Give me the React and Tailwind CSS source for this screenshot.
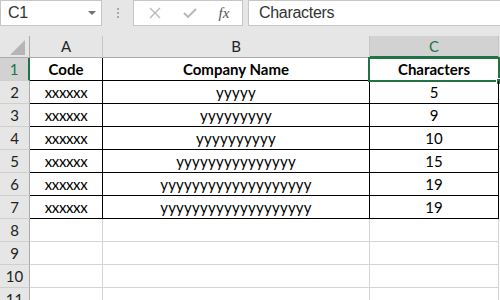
import React from "react";

const data = [
  ["Code", "Company Name", "Characters"],
  ["xxxxxx", "yyyyy", "5"],
  ["xxxxxx", "yyyyyyyyy", "9"],
  ["xxxxxx", "yyyyyyyyyy", "10"],
  ["xxxxxx", "yyyyyyyyyyyyyyy", "15"],
  ["xxxxxx", "yyyyyyyyyyyyyyyyyyy", "19"],
  ["xxxxxx", "yyyyyyyyyyyyyyyyyyy", "19"],
];

const cellFont = { fontFamily: "Lato, 'Open Sans', sans-serif" };

function TableRow({ n, cells }) {
  const first = n === 1;
  const txt = first ? "font-bold text-black" : "text-black";
  return (
    <div className="flex h-[23px]">
      <div
        className={
          first
            ? "w-[30px] shrink-0 flex items-center justify-center bg-[#d2d2d2] border-b border-b-[#cfcfcf] border-r-2 border-r-[#217346] text-[#217346] text-[15px]"
            : "w-[30px] shrink-0 flex items-center justify-center bg-[#e6e6e6] border-b border-b-[#cfcfcf] border-r border-r-[#ababab] text-[#222] text-[15px]"
        }
      >
        {n}
      </div>
      <div className={"w-[73px] shrink-0 flex items-center justify-center border-r border-b border-black text-[15px] " + txt}>
        <span className={first ? "" : "tracking-[-0.4px]"}>{cells[0]}</span>
      </div>
      <div className={"w-[267px] shrink-0 flex items-center justify-center border-r border-b border-black text-[15px] " + txt}>
        <span className={first ? "" : "tracking-[0.25px] pt-[1px]"}>{cells[1]}</span>
      </div>
      <div className={"relative w-[129px] shrink-0 flex items-center justify-center border-r border-b border-black text-[15px] " + txt}>
        {cells[2]}
        {first && (
          <div className="absolute left-[-2px] top-[-1px] right-[-2px] bottom-[-2px] border-2 border-[#217346]">
            <div className="absolute right-[-4px] bottom-[-4px] w-[6px] h-[6px] bg-[#217346] border-l border-t border-white" />
          </div>
        )}
      </div>
    </div>
  );
}

function EmptyRow({ n }) {
  return (
    <div className="flex h-[23px]">
      <div className="w-[30px] shrink-0 flex items-center justify-center bg-[#e6e6e6] border-b border-b-[#cfcfcf] border-r border-r-[#ababab] text-[#222] text-[15px]">
        {n}
      </div>
      <div className="w-[73px] shrink-0 border-r border-b border-[#d4d4d4]" />
      <div className="w-[267px] shrink-0 border-r border-b border-[#d4d4d4]" />
      <div className="w-[129px] shrink-0 border-r border-b border-[#d4d4d4]" />
    </div>
  );
}

export default function App() {
  return (
    <div className="w-[500px] h-[300px] overflow-hidden bg-[#e6e6e6] flex flex-col">
      {/* formula bar */}
      <div className="h-[26px] flex shrink-0" style={{ fontFamily: "'Liberation Sans', Arial, sans-serif" }}>
        <div className="w-[102px] h-[26px] bg-white border border-[#c6c6c6] flex items-center justify-between pl-[7px] pr-[5px]">
          <span className="text-[16px] text-[#333] tracking-[-0.3px]">C1</span>
          <svg width="8" height="4" viewBox="0 0 8 4">
            <path d="M0 0 H8 L4 4 Z" fill="#707070" />
          </svg>
        </div>
        <div className="w-[31px] flex flex-col items-center justify-center gap-[2px]">
          <div className="w-[2px] h-[2px] bg-[#a8a8a8]" />
          <div className="w-[2px] h-[2px] bg-[#a8a8a8]" />
          <div className="w-[2px] h-[2px] bg-[#a8a8a8]" />
        </div>
        <div className="w-[110px] h-[26px] bg-white border border-[#c6c6c6] flex items-center">
          <div className="w-[36px] flex justify-center pl-[6px]">
            <svg width="12" height="12" viewBox="0 0 12 12">
              <path d="M1 1 L11 11 M11 1 L1 11" stroke="#b8b8b8" strokeWidth="1.4" fill="none" />
            </svg>
          </div>
          <div className="w-[36px] flex justify-center pl-[4px]">
            <svg width="14" height="10" viewBox="0 0 14 10">
              <path d="M1 5 L5 9 L13 1" stroke="#b8b8b8" strokeWidth="2" fill="none" />
            </svg>
          </div>
          <div className="w-[36px] flex justify-center">
            <span className="text-[15px] italic text-[#555]" style={{ fontFamily: "'Liberation Serif', serif" }}>
              fx
            </span>
          </div>
        </div>
        <div className="w-[5px]" />
        <div className="flex-1 h-[26px] bg-white border-y border-l border-[#c6c6c6] flex items-center pl-[10px]">
          <span className="text-[16px] text-[#333] tracking-[-0.3px]">Characters</span>
        </div>
      </div>
      <div className="h-[10px] shrink-0" />
      {/* grid */}
      <div className="flex-1 bg-white" style={cellFont}>
        <div className="flex h-[22px] bg-[#e6e6e6]">
          <div className="w-[30px] shrink-0 flex items-end justify-end border-r border-b border-[#ababab] pr-[4px] pb-[2px]">
            <svg width="15" height="15" viewBox="0 0 15 15">
              <path d="M15 0 L15 15 L0 15 Z" fill="#b5b5b5" />
            </svg>
          </div>
          <div className="w-[73px] shrink-0 flex items-center justify-center border-r border-r-[#c6c6c6] border-b border-b-[#ababab] text-[15px] text-[#222]">
            A
          </div>
          <div className="w-[267px] shrink-0 flex items-center justify-center border-r border-r-[#c6c6c6] border-b border-b-[#ababab] text-[15px] text-[#222]">
            B
          </div>
          <div className="w-[129px] shrink-0 flex items-center justify-center bg-[#d2d2d2] border-r border-r-[#c6c6c6] border-b-2 border-b-[#217346] text-[15px] text-[#217346]">
            C
          </div>
        </div>
        {data.map((r, i) => (
          <TableRow key={i} n={i + 1} cells={r} />
        ))}
        {[8, 9, 10, 11].map((n) => (
          <EmptyRow key={n} n={n} />
        ))}
      </div>
    </div>
  );
}
